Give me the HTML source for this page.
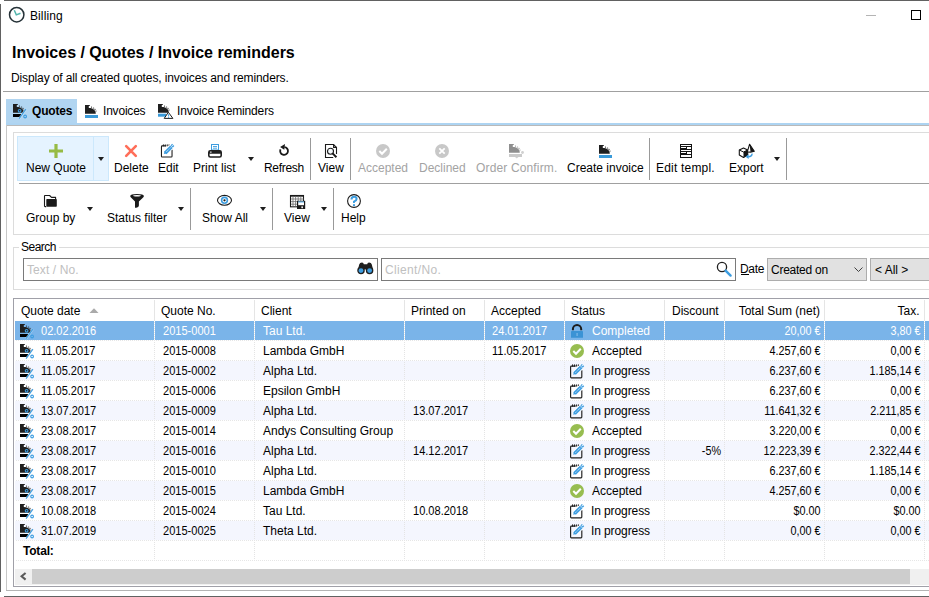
<!DOCTYPE html>
<html><head><meta charset="utf-8"><style>
*{box-sizing:border-box}
html,body{margin:0;padding:0}
body{width:929px;height:597px;overflow:hidden;position:relative;background:#fff;font-family:"Liberation Sans",sans-serif;font-size:12px;color:#000}
.a{position:absolute}
.t{position:absolute;line-height:14px;white-space:pre}
.hl{position:absolute;height:1px}
.vl{position:absolute;width:1px}
.dis{color:#a3a3a3}
.dd{position:absolute;width:0;height:0;border-left:3.5px solid transparent;border-right:3.5px solid transparent;border-top:4px solid #1e1e1e}
svg{position:absolute;overflow:visible}
.n{transform:scaleX(0.92);transform-origin:0 0}
.nr{transform:scaleX(0.9);transform-origin:100% 0}
.row{position:absolute;left:14px;width:915px;height:20px}
.row .c{position:absolute;top:0;height:19px;line-height:19px;white-space:pre}
.row .r{text-align:right}
.dot{position:absolute;height:1px;background-image:linear-gradient(to right,#e6e6e6 50%,transparent 50%);background-size:2px 1px}
.vdot{position:absolute;width:1px;background-image:linear-gradient(to bottom,transparent 50%,#e4e4e4 50%);background-size:1px 2px}
</style></head><body>
<div class="hl" style="left:4px;top:0px;width:925px;background:#616161"></div>
<div class="vl" style="left:0px;top:4px;height:588px;background:#616161"></div>
<div class="hl" style="left:4px;top:596px;width:925px;background:#616161"></div>
<svg style="left:8px;top:6px" width="17" height="17" viewBox="0 0 17 17"><circle cx="8.7" cy="8.7" r="7.2" fill="none" stroke="#263238" stroke-width="1.5"/><path d="M6.3 4.3L8.3 8.9L12.5 7.2" fill="none" stroke="#52b5ad" stroke-width="1.5"/></svg>
<div class="t" style="left:30px;top:9px;letter-spacing:0.1px">Billing</div>
<div class="hl" style="left:866px;top:15px;width:10px;background:#b4b4b4"></div>
<div class="a" style="left:911px;top:10px;width:10px;height:10px;border:1px solid #000"></div>
<div class="t" style="left:12px;top:44px;font-size:16px;font-weight:bold;line-height:18px">Invoices / Quotes / Invoice reminders</div>
<div class="t" style="left:11px;top:71px;letter-spacing:-0.12px">Display of all created quotes, invoices and reminders.</div>
<div class="hl" style="left:3px;top:91px;width:926px;background:#a0a0a0"></div>
<div class="a" style="left:6px;top:99px;width:71px;height:24px;background:#b1d5f1"></div>
<div class="a" style="left:6px;top:123px;width:923px;height:2px;background:#add4f2"></div>
<div class="hl" style="left:6px;top:125px;width:923px;background:#b9b9b9"></div>
<svg style="left:13px;top:104px" width="15" height="16" viewBox="0 0 15 16"><path d="M0 0H4.8V1H3.8V3.1C7.6 3.1 10.8 5 10.8 8.7H0Z" fill="#1f1f1f"/><circle cx="6.5" cy="2.1" r="0.6" fill="#1f1f1f"/><circle cx="8.6" cy="3" r="0.6" fill="#1f1f1f"/><circle cx="10" cy="4.3" r="0.6" fill="#1f1f1f"/><circle cx="11" cy="6" r="0.55" fill="#1f1f1f"/><rect x="0" y="10" width="8" height="3" fill="#000"/><path d="M6.1 14.7L12.9 5.1" stroke="#fff" stroke-width="2" opacity="0.5"/><path d="M6.1 14.7L12.9 5.1" stroke="#3d9de0" stroke-width="1.15"/><circle cx="6.6" cy="6.8" r="1.35" fill="#1f1f1f" stroke="#3d9de0" stroke-width="1.1"/><circle cx="12.1" cy="12.5" r="1.35" fill="none" stroke="#3d9de0" stroke-width="1.1"/></svg>
<div class="t" style="left:32px;top:104px;font-weight:bold;letter-spacing:-0.2px">Quotes</div>
<svg style="left:85px;top:105px" width="14" height="14" viewBox="0 0 14 14"><path d="M0 0H4.8V1H3.8V3.1C7.6 3.1 10.8 5 10.8 8.7H0Z" fill="#1f1f1f"/><circle cx="6.5" cy="2.1" r="0.6" fill="#1f1f1f"/><circle cx="8.6" cy="3" r="0.6" fill="#1f1f1f"/><circle cx="10" cy="4.3" r="0.6" fill="#1f1f1f"/><circle cx="11" cy="6" r="0.55" fill="#1f1f1f"/><rect x="0" y="10" width="13" height="3" fill="#3a9ad9"/></svg>
<div class="t" style="left:103px;top:104px;letter-spacing:-0.2px">Invoices</div>
<svg style="left:158px;top:104px" width="16" height="16" viewBox="0 0 16 16"><path d="M0 0H4.8V1H3.8V3.1C7.6 3.1 10.8 5 10.8 8.7H0Z" fill="#1f1f1f"/><circle cx="6.5" cy="2.1" r="0.6" fill="#1f1f1f"/><circle cx="8.6" cy="3" r="0.6" fill="#1f1f1f"/><circle cx="10" cy="4.3" r="0.6" fill="#1f1f1f"/><circle cx="11" cy="6" r="0.55" fill="#1f1f1f"/><rect x="0" y="9.7" width="8.5" height="3" fill="#3a9ad9"/><path d="M10.4 8.3L14.9 14.4H6.2Z" fill="#fff" stroke="#1f1f1f" stroke-width="1"/><rect x="10.1" y="10.2" width="1" height="2.3" fill="#3d9de0"/><rect x="10.1" y="13" width="1" height="0.9" fill="#3d9de0"/></svg>
<div class="t" style="left:177px;top:104px;letter-spacing:-0.15px">Invoice Reminders</div>
<div class="vl" style="left:6px;top:125px;height:466px;background:#c8c8c8"></div>
<div class="hl" style="left:6px;top:590px;width:923px;background:#b4b4b4"></div>
<div class="a" style="left:13px;top:132px;width:930px;height:103px;border:1px solid #dcdcdc"></div>
<div class="a" style="left:17px;top:136px;width:92px;height:45px;background:#e5f3ff;border:1px solid #cce8fc"></div>
<div class="vl" style="left:93px;top:137px;height:43px;background:#cce8fc"></div>
<div class="hl" style="left:19px;top:183px;width:910px;background:#a0a0a0"></div>
<div class="t" style="left:26px;top:161px;">New Quote</div>
<div class="t" style="left:114px;top:161px;">Delete</div>
<div class="t" style="left:158px;top:161px;">Edit</div>
<div class="t" style="left:193px;top:161px;">Print list</div>
<div class="t" style="left:264px;top:161px;letter-spacing:-0.3px">Refresh</div>
<div class="t" style="left:318px;top:161px;">View</div>
<div class="t dis" style="left:358px;top:161px;">Accepted</div>
<div class="t dis" style="left:419px;top:161px;">Declined</div>
<div class="t dis" style="left:476px;top:161px;letter-spacing:0.15px">Order Confirm.</div>
<div class="t" style="left:567px;top:161px;">Create invoice</div>
<div class="t" style="left:656px;top:161px;letter-spacing:0.2px">Edit templ.</div>
<div class="t" style="left:729px;top:161px;">Export</div>
<div class="dd" style="left:98px;top:157px"></div>
<div class="dd" style="left:248px;top:157px"></div>
<div class="dd" style="left:774px;top:157px"></div>
<div class="vl" style="left:310px;top:138px;height:42px;background:#999"></div>
<div class="vl" style="left:350px;top:138px;height:42px;background:#999"></div>
<div class="vl" style="left:649px;top:138px;height:42px;background:#999"></div>
<div class="vl" style="left:786px;top:138px;height:42px;background:#999"></div>
<svg style="left:125px;top:145px" width="12" height="12" viewBox="0 0 12 12"><path d="M1.2 1.2L10.8 10.8M10.8 1.2L1.2 10.8" stroke="#ff6e59" stroke-width="2.6" stroke-linecap="round"/></svg>
<svg style="left:49px;top:144px" width="14" height="14" viewBox="0 0 14 14"><path d="M7 0V14M0 7H14" stroke="#96bb45" stroke-width="3.2"/></svg>
<svg style="left:159px;top:142px" width="17" height="17" viewBox="0 0 18 18"><path d="M7.6 4.1H3.4Q2.6 4.1 2.6 4.9V15Q2.6 15.8 3.4 15.8H13Q13.8 15.8 13.8 15V8.2" fill="none" stroke="#1f1f1f" stroke-width="1.15"/><ellipse cx="4.6" cy="3.5" rx="0.6" ry="1.2" fill="#1f1f1f"/><ellipse cx="6.6" cy="3.5" rx="0.6" ry="1.2" fill="#1f1f1f"/><ellipse cx="8.7" cy="3.5" rx="0.6" ry="1.2" fill="#1f1f1f"/><ellipse cx="10.6" cy="3.3" rx="0.5" ry="1" fill="#1f1f1f"/><path d="M6.9 11.3L13.3 4.9" stroke="#fff" stroke-width="5.2"/><path d="M6.6 11.6L13.2 5" stroke="#3d9de0" stroke-width="3.6"/><path d="M7.6 10.6L12.4 5.8" stroke="#fff" stroke-width="0.9" stroke-dasharray="1 0.9"/><path d="M5.2 12.8L5.9 9.9L8.2 12.1Z" fill="#3d9de0"/><path d="M12.4 3.4L13.9 1.9L16.2 4.2L14.7 5.7Z" fill="#3d9de0"/><path d="M13.6 3.4L14.2 2.8L15.1 3.7L14.5 4.3Z" fill="#fff"/></svg>
<svg style="left:208px;top:143px" width="15" height="15" viewBox="0 0 15 15"><rect x="3.5" y="1.5" width="7" height="5.5" fill="#fff" stroke="#3d9de0" stroke-width="1"/><path d="M5 3.5H9M5 5.2H9" stroke="#3d9de0" stroke-width="0.9"/><rect x="0.8" y="7.8" width="12.4" height="6.2" rx="1.6" fill="none" stroke="#1f1f1f" stroke-width="1.6"/><rect x="0.8" y="7.8" width="12.4" height="3" rx="1" fill="#1f1f1f"/><rect x="2" y="8.6" width="1.6" height="1" fill="#fff"/></svg>
<svg style="left:274px;top:140px" width="20" height="20" viewBox="0 0 20 20"><path d="M10.4 7.1A3.9 3.9 0 1 1 6.5 9.4" fill="none" stroke="#1a1a1a" stroke-width="1.8"/><path d="M11 3.9L6.1 6.9L10.3 9.8Z" fill="#1a1a1a"/></svg>
<svg style="left:324px;top:143px" width="14" height="16" viewBox="0 0 14 16"><path d="M9.2 14.5H1.5V1.5H9.6L12.5 4.4V11" fill="none" stroke="#1a1a1a" stroke-width="1.1"/><path d="M9.6 1.5V4.4H12.5" fill="none" stroke="#1a1a1a" stroke-width="1.1"/><circle cx="6.5" cy="8.2" r="3" fill="#f4f9fd" stroke="#1a1a1a" stroke-width="1.1"/><path d="M8.6 10.4L12.4 14.2" stroke="#1a1a1a" stroke-width="2"/></svg>
<svg style="left:376px;top:144px" width="14" height="14" viewBox="0 0 14 14"><circle cx="7" cy="7" r="7" fill="#c8c8c8"/><path d="M3.3 7L6 9.8L10.8 4.8" fill="none" stroke="#fff" stroke-width="2"/></svg>
<svg style="left:435px;top:144px" width="14" height="14" viewBox="0 0 14 14"><circle cx="7" cy="7" r="7" fill="#c8c8c8"/><path d="M4.3 4.3L9.7 9.7M9.7 4.3L4.3 9.7" fill="none" stroke="#fff" stroke-width="1.8"/></svg>
<svg style="left:509px;top:144px" width="14" height="14" viewBox="0 0 14 14"><path d="M0 0H4.8V1H3.8V3.1C7.6 3.1 10.8 5 10.8 8.7H0Z" fill="#8f8f8f"/><circle cx="6.5" cy="2.1" r="0.6" fill="#8f8f8f"/><circle cx="8.6" cy="3" r="0.6" fill="#8f8f8f"/><circle cx="10" cy="4.3" r="0.6" fill="#8f8f8f"/><circle cx="11" cy="6" r="0.55" fill="#8f8f8f"/><rect x="0" y="10" width="13" height="3" fill="#cacaca"/><circle cx="13.5" cy="8.5" r="1.4" fill="#d0d0d0"/><path d="M6 13H9.5L7.75 14.6Z" fill="#d0d0d0"/></svg>
<svg style="left:599px;top:145px" width="14" height="14" viewBox="0 0 14 14"><path d="M0 0H4.8V1H3.8V3.1C7.6 3.1 10.8 5 10.8 8.7H0Z" fill="#1f1f1f"/><circle cx="6.5" cy="2.1" r="0.6" fill="#1f1f1f"/><circle cx="8.6" cy="3" r="0.6" fill="#1f1f1f"/><circle cx="10" cy="4.3" r="0.6" fill="#1f1f1f"/><circle cx="11" cy="6" r="0.55" fill="#1f1f1f"/><rect x="0" y="10" width="13" height="3" fill="#3a9ad9"/></svg>
<svg style="left:680px;top:144px" width="12" height="14" viewBox="0 0 12 14"><g shape-rendering="crispEdges"><rect x="0" y="0" width="12" height="14" fill="#141414"/><rect x="1" y="1" width="10" height="1" fill="#fff"/><rect x="1" y="3" width="5" height="1" fill="#fff"/><rect x="7" y="3" width="4" height="2" fill="#fff"/><rect x="1" y="6" width="10" height="1" fill="#fff"/><rect x="1" y="8" width="5" height="1" fill="#fff"/><rect x="7" y="8" width="4" height="2" fill="#fff"/><rect x="1" y="11" width="10" height="2" fill="#fff"/></g></svg>
<svg style="left:738px;top:143px" width="18" height="17" viewBox="0 0 18 17"><path d="M1.3 7L5.5 5L9.7 7V12L5.5 14.4L1.3 12Z" fill="#fff" stroke="#141414" stroke-width="1.1" stroke-linejoin="round"/><path d="M1.3 7L5.5 9L9.7 7" fill="none" stroke="#141414" stroke-width="1"/><path d="M5.5 9L9.7 7V12L5.5 14.4Z" fill="#141414"/><path d="M11.6 1.2L16.3 8.2L12.6 9.1L9.3 8.9Z" fill="#fff" stroke="#141414" stroke-width="1.1" stroke-linejoin="round"/><path d="M11.6 1.2L16.3 8.2L12.6 9.1Z" fill="#141414"/><path d="M14 10.6Q14.2 13.6 10.2 13.7" fill="none" stroke="#3d9de0" stroke-width="1.5"/><path d="M7.6 13.7L10.6 11.3V16.1Z" fill="#3d9de0"/></svg>
<div class="t" style="left:26px;top:211px;">Group by</div>
<div class="t" style="left:107px;top:211px;">Status filter</div>
<div class="t" style="left:202px;top:211px;">Show All</div>
<div class="t" style="left:284px;top:211px;">View</div>
<div class="t" style="left:341px;top:211px;">Help</div>
<div class="dd" style="left:87px;top:207px"></div>
<div class="dd" style="left:178px;top:207px"></div>
<div class="dd" style="left:260px;top:207px"></div>
<div class="dd" style="left:321px;top:207px"></div>
<div class="vl" style="left:190px;top:188px;height:42px;background:#999"></div>
<div class="vl" style="left:272px;top:188px;height:42px;background:#999"></div>
<div class="vl" style="left:333px;top:188px;height:42px;background:#999"></div>
<svg style="left:43px;top:194px" width="15" height="14" viewBox="0 0 15 14"><path d="M3.2 12.6H2.1Q1.5 12.6 1.5 12V2Q1.5 1.5 2 1.5H6.6L8.5 3.4H12.6V5.2" fill="none" stroke="#1a1a1a" stroke-width="1.1" stroke-linejoin="round"/><rect x="3.3" y="5" width="10.5" height="7.7" rx="0.7" fill="#1a1a1a"/></svg>
<svg style="left:130px;top:193px" width="15" height="16" viewBox="0 0 15 16"><path d="M0.2 3Q0.2 1 6.9 1Q13.9 1 13.9 3Q13.9 4 12.6 5.1L8.9 8.4V12.6Q8.9 14.4 6.3 14.8H5V8.4L1.5 5.1Q0.2 4 0.2 3Z" fill="#1a1a1a"/><ellipse cx="7" cy="2.7" rx="3.9" ry="0.75" fill="#fff"/></svg>
<svg style="left:216px;top:194px" width="17" height="13" viewBox="0 0 17 13"><ellipse cx="8.5" cy="6.3" rx="7" ry="4.9" fill="#fff" stroke="#1a1a1a" stroke-width="1.1"/><circle cx="8.5" cy="6.3" r="2.9" fill="#fff" stroke="#3d9de0" stroke-width="1.6"/><circle cx="8.5" cy="6.3" r="1.15" fill="#1a1a1a"/></svg>
<svg style="left:289px;top:194px" width="17" height="16" viewBox="0 0 17 16"><rect x="1.5" y="1.5" width="13" height="11.3" fill="#fff" stroke="#1a1a1a" stroke-width="1.1"/><rect x="1" y="1" width="14" height="1.7" fill="#1a1a1a"/><path d="M4 2V12.5M6.6 2V12.5M9.2 2V12.5M11.8 2V12.5M2 5H14.5M2 7.6H14.5M2 10.2H14.5" stroke="#6a6a6a" stroke-width="0.8"/><rect x="8" y="6.8" width="8.2" height="8.2" fill="#1a1a1a"/><rect x="9.2" y="7.6" width="5.8" height="3.6" fill="#fff"/><rect x="9.2" y="7.5" width="5.8" height="0.9" fill="#3d9de0"/><rect x="12.4" y="12.4" width="1.5" height="1.8" fill="#fff"/></svg>
<svg style="left:347px;top:194px" width="15" height="15" viewBox="0 0 15 15"><circle cx="7" cy="7" r="6.4" fill="#fff" stroke="#1a1a1a" stroke-width="1.1"/><path d="M4.5 5.4Q4.5 2.8 7 2.8Q9.6 2.8 9.6 5.1Q9.6 6.5 7 7.6V9" fill="none" stroke="#3d9de0" stroke-width="2"/><rect x="6" y="10.2" width="2" height="1.8" fill="#3d9de0"/></svg>
<div class="a" style="left:13px;top:247px;width:930px;height:43px;border:1px solid #dcdcdc"></div>
<div class="a" style="left:19px;top:240px;width:40px;height:12px;background:#fff"></div>
<div class="t" style="left:21px;top:240px;letter-spacing:-0.5px">Search</div>
<div class="a" style="left:23px;top:258px;width:355px;height:23px;border:1px solid #7a7a7a;background:#fff"></div>
<div class="t" style="left:27px;top:263px;color:#c0c0c0;letter-spacing:0.1px">Text / No.</div>
<svg style="left:357px;top:262px" width="17" height="13" viewBox="0 0 17 13"><path d="M2.2 2.5Q2.7 0.6 5 0.6Q6.6 0.6 6.8 2.3H10.2Q10.4 0.6 12 0.6Q14.3 0.6 14.8 2.5L16 7.5H1Z" fill="#1f1f1f"/><circle cx="4" cy="8.6" r="3.1" fill="#3d9de0" stroke="#1f1f1f" stroke-width="1.3"/><circle cx="12.6" cy="8.6" r="3.1" fill="#3d9de0" stroke="#1f1f1f" stroke-width="1.3"/></svg>
<div class="a" style="left:381px;top:258px;width:355px;height:23px;border:1px solid #7a7a7a;background:#fff"></div>
<div class="t" style="left:385px;top:263px;color:#c0c0c0;letter-spacing:0.35px">Client/No.</div>
<svg style="left:716px;top:261px" width="17" height="17" viewBox="0 0 17 17"><circle cx="6" cy="6" r="4.6" fill="#fff" stroke="#1f1f1f" stroke-width="1.3"/><path d="M9.6 9.6L14.6 14.6" stroke="#3d9de0" stroke-width="2.4" stroke-linecap="round"/></svg>
<div class="t" style="left:740px;top:262px;letter-spacing:-0.3px">Date</div>
<div class="hl" style="left:741px;top:274px;width:8px;background:#000"></div>
<div class="a" style="left:767px;top:258px;width:100px;height:23px;border:1px solid #adadad;background:#e1e1e1"></div>
<div class="t" style="left:771px;top:263px;letter-spacing:-0.25px">Created on</div>
<svg style="left:854px;top:267px" width="9" height="6" viewBox="0 0 9 6"><path d="M0.5 0.5L4.5 4.5L8.5 0.5" fill="none" stroke="#404040" stroke-width="1"/></svg>
<div class="a" style="left:870px;top:258px;width:80px;height:23px;border:1px solid #adadad;background:#e1e1e1"></div>
<div class="t" style="left:875px;top:263px;">&lt; All &gt;</div>
<div class="a" style="left:13px;top:298px;width:930px;height:289px;border:1px solid #a0a0a8"></div>
<div class="t" style="left:21px;top:304px;">Quote date</div>
<div class="t" style="left:161px;top:304px;">Quote No.</div>
<div class="t" style="left:261px;top:304px;">Client</div>
<div class="t" style="left:411px;top:304px;">Printed on</div>
<div class="t" style="left:491px;top:304px;">Accepted</div>
<div class="t" style="left:571px;top:304px;">Status</div>
<div class="t" style="left:672px;top:304px;">Discount</div>
<div class="t" style="left:724px;top:304px;width:96px;text-align:right">Total Sum (net)</div>
<div class="t" style="left:824px;top:304px;width:95.5px;text-align:right">Tax.</div>
<svg style="left:89px;top:308px" width="10" height="5" viewBox="0 0 10 5"><path d="M0.5 5L5 0.3L9.5 5Z" fill="#aaa"/></svg>
<div class="vl" style="left:154px;top:300px;height:21px;background:#e5e5e5"></div>
<div class="vl" style="left:254px;top:300px;height:21px;background:#e5e5e5"></div>
<div class="vl" style="left:404px;top:300px;height:21px;background:#e5e5e5"></div>
<div class="vl" style="left:484px;top:300px;height:21px;background:#e5e5e5"></div>
<div class="vl" style="left:564px;top:300px;height:21px;background:#e5e5e5"></div>
<div class="vl" style="left:664px;top:300px;height:21px;background:#e5e5e5"></div>
<div class="vl" style="left:724px;top:300px;height:21px;background:#e5e5e5"></div>
<div class="vl" style="left:824px;top:300px;height:21px;background:#e5e5e5"></div>
<div class="vl" style="left:924px;top:300px;height:21px;background:#e5e5e5"></div>
<div class="a" style="left:15px;top:321px;width:914px;height:19px;background:#7ab4e9"></div>
<svg style="left:20px;top:324px" width="15" height="16" viewBox="0 0 15 16"><path d="M0 0H4.8V1H3.8V3.1C7.6 3.1 10.8 5 10.8 8.7H0Z" fill="#1f1f1f"/><circle cx="6.5" cy="2.1" r="0.6" fill="#1f1f1f"/><circle cx="8.6" cy="3" r="0.6" fill="#1f1f1f"/><circle cx="10" cy="4.3" r="0.6" fill="#1f1f1f"/><circle cx="11" cy="6" r="0.55" fill="#1f1f1f"/><rect x="0" y="10" width="8" height="3" fill="#000"/><path d="M6.1 14.7L12.9 5.1" stroke="#fff" stroke-width="2" opacity="0.5"/><path d="M6.1 14.7L12.9 5.1" stroke="#3d9de0" stroke-width="1.15"/><circle cx="6.6" cy="6.8" r="1.35" fill="#1f1f1f" stroke="#3d9de0" stroke-width="1.1"/><circle cx="12.1" cy="12.5" r="1.35" fill="none" stroke="#3d9de0" stroke-width="1.1"/></svg>
<div class="t n" style="left:41px;top:324px;color:#fff">02.02.2016</div>
<div class="t n" style="left:163px;top:324px;color:#fff">2015-0001</div>
<div class="t " style="left:263px;top:324px;color:#fff">Tau Ltd.</div>
<div class="t n" style="left:492px;top:324px;color:#fff">24.01.2017</div>
<svg style="left:568px;top:321px" width="18" height="18" viewBox="0 0 18 18"><path d="M4.9 9.3V8.1A4.15 4.15 0 0 1 13.2 8.1V9.3" fill="none" stroke="#1c1c1c" stroke-width="2"/><rect x="3" y="10.1" width="12" height="6.7" rx="0.4" fill="#3b93d5"/><rect x="8.4" y="12" width="1.4" height="3" fill="#74b3e6"/></svg>
<div class="t " style="left:592px;top:324px;color:#fff">Completed</div>
<div class="t nr" style="left:724px;top:324px;width:96.6px;text-align:right;color:#fff">20,00 €</div>
<div class="t nr" style="left:824px;top:324px;width:96.6px;text-align:right;color:#fff">3,80 €</div>
<div class="dot" style="left:16px;top:340px;width:913px"></div>
<div class="vdot" style="left:154px;top:321px;height:19px;background-image:linear-gradient(to bottom,#fff 50%,#e4e4e4 50%)"></div>
<div class="vdot" style="left:254px;top:321px;height:19px;background-image:linear-gradient(to bottom,#fff 50%,#e4e4e4 50%)"></div>
<div class="vdot" style="left:404px;top:321px;height:19px;background-image:linear-gradient(to bottom,#fff 50%,#e4e4e4 50%)"></div>
<div class="vdot" style="left:484px;top:321px;height:19px;background-image:linear-gradient(to bottom,#fff 50%,#e4e4e4 50%)"></div>
<div class="vdot" style="left:564px;top:321px;height:19px;background-image:linear-gradient(to bottom,#fff 50%,#e4e4e4 50%)"></div>
<div class="vdot" style="left:664px;top:321px;height:19px;background-image:linear-gradient(to bottom,#fff 50%,#e4e4e4 50%)"></div>
<div class="vdot" style="left:724px;top:321px;height:19px;background-image:linear-gradient(to bottom,#fff 50%,#e4e4e4 50%)"></div>
<div class="vdot" style="left:824px;top:321px;height:19px;background-image:linear-gradient(to bottom,#fff 50%,#e4e4e4 50%)"></div>
<div class="vdot" style="left:924px;top:321px;height:19px;background-image:linear-gradient(to bottom,#fff 50%,#e4e4e4 50%)"></div>
<div class="a" style="left:15px;top:341px;width:914px;height:19px;background:#fff"></div>
<svg style="left:20px;top:344px" width="15" height="16" viewBox="0 0 15 16"><path d="M0 0H4.8V1H3.8V3.1C7.6 3.1 10.8 5 10.8 8.7H0Z" fill="#1f1f1f"/><circle cx="6.5" cy="2.1" r="0.6" fill="#1f1f1f"/><circle cx="8.6" cy="3" r="0.6" fill="#1f1f1f"/><circle cx="10" cy="4.3" r="0.6" fill="#1f1f1f"/><circle cx="11" cy="6" r="0.55" fill="#1f1f1f"/><rect x="0" y="10" width="8" height="3" fill="#000"/><path d="M6.1 14.7L12.9 5.1" stroke="#fff" stroke-width="2" opacity="0.5"/><path d="M6.1 14.7L12.9 5.1" stroke="#3d9de0" stroke-width="1.15"/><circle cx="6.6" cy="6.8" r="1.35" fill="#1f1f1f" stroke="#3d9de0" stroke-width="1.1"/><circle cx="12.1" cy="12.5" r="1.35" fill="none" stroke="#3d9de0" stroke-width="1.1"/></svg>
<div class="t n" style="left:41px;top:344px;color:#000">11.05.2017</div>
<div class="t n" style="left:163px;top:344px;color:#000">2015-0008</div>
<div class="t " style="left:263px;top:344px;color:#000">Lambda GmbH</div>
<div class="t n" style="left:492px;top:344px;color:#000">11.05.2017</div>
<svg style="left:570px;top:344px" width="14" height="14" viewBox="0 0 14 14"><circle cx="7" cy="7" r="7" fill="#97bd50"/><path d="M3.3 7L6 9.8L10.8 4.8" fill="none" stroke="#fff" stroke-width="2"/></svg>
<div class="t " style="left:592px;top:344px;color:#000">Accepted</div>
<div class="t nr" style="left:724px;top:344px;width:96.6px;text-align:right;color:#000">4.257,60 €</div>
<div class="t nr" style="left:824px;top:344px;width:96.6px;text-align:right;color:#000">0,00 €</div>
<div class="dot" style="left:16px;top:360px;width:913px"></div>
<div class="vdot" style="left:154px;top:341px;height:19px"></div>
<div class="vdot" style="left:254px;top:341px;height:19px"></div>
<div class="vdot" style="left:404px;top:341px;height:19px"></div>
<div class="vdot" style="left:484px;top:341px;height:19px"></div>
<div class="vdot" style="left:564px;top:341px;height:19px"></div>
<div class="vdot" style="left:664px;top:341px;height:19px"></div>
<div class="vdot" style="left:724px;top:341px;height:19px"></div>
<div class="vdot" style="left:824px;top:341px;height:19px"></div>
<div class="vdot" style="left:924px;top:341px;height:19px"></div>
<div class="a" style="left:15px;top:361px;width:914px;height:19px;background:#f4f6fe"></div>
<svg style="left:20px;top:364px" width="15" height="16" viewBox="0 0 15 16"><path d="M0 0H4.8V1H3.8V3.1C7.6 3.1 10.8 5 10.8 8.7H0Z" fill="#1f1f1f"/><circle cx="6.5" cy="2.1" r="0.6" fill="#1f1f1f"/><circle cx="8.6" cy="3" r="0.6" fill="#1f1f1f"/><circle cx="10" cy="4.3" r="0.6" fill="#1f1f1f"/><circle cx="11" cy="6" r="0.55" fill="#1f1f1f"/><rect x="0" y="10" width="8" height="3" fill="#000"/><path d="M6.1 14.7L12.9 5.1" stroke="#fff" stroke-width="2" opacity="0.5"/><path d="M6.1 14.7L12.9 5.1" stroke="#3d9de0" stroke-width="1.15"/><circle cx="6.6" cy="6.8" r="1.35" fill="#1f1f1f" stroke="#3d9de0" stroke-width="1.1"/><circle cx="12.1" cy="12.5" r="1.35" fill="none" stroke="#3d9de0" stroke-width="1.1"/></svg>
<div class="t n" style="left:41px;top:364px;color:#000">11.05.2017</div>
<div class="t n" style="left:163px;top:364px;color:#000">2015-0002</div>
<div class="t " style="left:263px;top:364px;color:#000">Alpha Ltd.</div>
<svg style="left:568px;top:362px" width="18" height="18" viewBox="0 0 18 18"><path d="M7.6 4.1H3.4Q2.6 4.1 2.6 4.9V15Q2.6 15.8 3.4 15.8H13Q13.8 15.8 13.8 15V8.2" fill="none" stroke="#1f1f1f" stroke-width="1.15"/><ellipse cx="4.6" cy="3.5" rx="0.6" ry="1.2" fill="#1f1f1f"/><ellipse cx="6.6" cy="3.5" rx="0.6" ry="1.2" fill="#1f1f1f"/><ellipse cx="8.7" cy="3.5" rx="0.6" ry="1.2" fill="#1f1f1f"/><ellipse cx="10.6" cy="3.3" rx="0.5" ry="1" fill="#1f1f1f"/><path d="M6.9 11.3L13.3 4.9" stroke="#fff" stroke-width="5.2"/><path d="M6.6 11.6L13.2 5" stroke="#3d9de0" stroke-width="3.6"/><path d="M7.6 10.6L12.4 5.8" stroke="#fff" stroke-width="0.9" stroke-dasharray="1 0.9"/><path d="M5.2 12.8L5.9 9.9L8.2 12.1Z" fill="#3d9de0"/><path d="M12.4 3.4L13.9 1.9L16.2 4.2L14.7 5.7Z" fill="#3d9de0"/><path d="M13.6 3.4L14.2 2.8L15.1 3.7L14.5 4.3Z" fill="#fff"/></svg>
<div class="t" style="left:591px;top:364px;color:#000;letter-spacing:-0.1px">In progress</div>
<div class="t nr" style="left:724px;top:364px;width:96.6px;text-align:right;color:#000">6.237,60 €</div>
<div class="t nr" style="left:824px;top:364px;width:96.6px;text-align:right;color:#000">1.185,14 €</div>
<div class="dot" style="left:16px;top:380px;width:913px"></div>
<div class="vdot" style="left:154px;top:361px;height:19px"></div>
<div class="vdot" style="left:254px;top:361px;height:19px"></div>
<div class="vdot" style="left:404px;top:361px;height:19px"></div>
<div class="vdot" style="left:484px;top:361px;height:19px"></div>
<div class="vdot" style="left:564px;top:361px;height:19px"></div>
<div class="vdot" style="left:664px;top:361px;height:19px"></div>
<div class="vdot" style="left:724px;top:361px;height:19px"></div>
<div class="vdot" style="left:824px;top:361px;height:19px"></div>
<div class="vdot" style="left:924px;top:361px;height:19px"></div>
<div class="a" style="left:15px;top:381px;width:914px;height:19px;background:#fff"></div>
<svg style="left:20px;top:384px" width="15" height="16" viewBox="0 0 15 16"><path d="M0 0H4.8V1H3.8V3.1C7.6 3.1 10.8 5 10.8 8.7H0Z" fill="#1f1f1f"/><circle cx="6.5" cy="2.1" r="0.6" fill="#1f1f1f"/><circle cx="8.6" cy="3" r="0.6" fill="#1f1f1f"/><circle cx="10" cy="4.3" r="0.6" fill="#1f1f1f"/><circle cx="11" cy="6" r="0.55" fill="#1f1f1f"/><rect x="0" y="10" width="8" height="3" fill="#000"/><path d="M6.1 14.7L12.9 5.1" stroke="#fff" stroke-width="2" opacity="0.5"/><path d="M6.1 14.7L12.9 5.1" stroke="#3d9de0" stroke-width="1.15"/><circle cx="6.6" cy="6.8" r="1.35" fill="#1f1f1f" stroke="#3d9de0" stroke-width="1.1"/><circle cx="12.1" cy="12.5" r="1.35" fill="none" stroke="#3d9de0" stroke-width="1.1"/></svg>
<div class="t n" style="left:41px;top:384px;color:#000">11.05.2017</div>
<div class="t n" style="left:163px;top:384px;color:#000">2015-0006</div>
<div class="t " style="left:263px;top:384px;color:#000">Epsilon GmbH</div>
<svg style="left:568px;top:382px" width="18" height="18" viewBox="0 0 18 18"><path d="M7.6 4.1H3.4Q2.6 4.1 2.6 4.9V15Q2.6 15.8 3.4 15.8H13Q13.8 15.8 13.8 15V8.2" fill="none" stroke="#1f1f1f" stroke-width="1.15"/><ellipse cx="4.6" cy="3.5" rx="0.6" ry="1.2" fill="#1f1f1f"/><ellipse cx="6.6" cy="3.5" rx="0.6" ry="1.2" fill="#1f1f1f"/><ellipse cx="8.7" cy="3.5" rx="0.6" ry="1.2" fill="#1f1f1f"/><ellipse cx="10.6" cy="3.3" rx="0.5" ry="1" fill="#1f1f1f"/><path d="M6.9 11.3L13.3 4.9" stroke="#fff" stroke-width="5.2"/><path d="M6.6 11.6L13.2 5" stroke="#3d9de0" stroke-width="3.6"/><path d="M7.6 10.6L12.4 5.8" stroke="#fff" stroke-width="0.9" stroke-dasharray="1 0.9"/><path d="M5.2 12.8L5.9 9.9L8.2 12.1Z" fill="#3d9de0"/><path d="M12.4 3.4L13.9 1.9L16.2 4.2L14.7 5.7Z" fill="#3d9de0"/><path d="M13.6 3.4L14.2 2.8L15.1 3.7L14.5 4.3Z" fill="#fff"/></svg>
<div class="t" style="left:591px;top:384px;color:#000;letter-spacing:-0.1px">In progress</div>
<div class="t nr" style="left:724px;top:384px;width:96.6px;text-align:right;color:#000">6.237,60 €</div>
<div class="t nr" style="left:824px;top:384px;width:96.6px;text-align:right;color:#000">0,00 €</div>
<div class="dot" style="left:16px;top:400px;width:913px"></div>
<div class="vdot" style="left:154px;top:381px;height:19px"></div>
<div class="vdot" style="left:254px;top:381px;height:19px"></div>
<div class="vdot" style="left:404px;top:381px;height:19px"></div>
<div class="vdot" style="left:484px;top:381px;height:19px"></div>
<div class="vdot" style="left:564px;top:381px;height:19px"></div>
<div class="vdot" style="left:664px;top:381px;height:19px"></div>
<div class="vdot" style="left:724px;top:381px;height:19px"></div>
<div class="vdot" style="left:824px;top:381px;height:19px"></div>
<div class="vdot" style="left:924px;top:381px;height:19px"></div>
<div class="a" style="left:15px;top:401px;width:914px;height:19px;background:#f4f6fe"></div>
<svg style="left:20px;top:404px" width="15" height="16" viewBox="0 0 15 16"><path d="M0 0H4.8V1H3.8V3.1C7.6 3.1 10.8 5 10.8 8.7H0Z" fill="#1f1f1f"/><circle cx="6.5" cy="2.1" r="0.6" fill="#1f1f1f"/><circle cx="8.6" cy="3" r="0.6" fill="#1f1f1f"/><circle cx="10" cy="4.3" r="0.6" fill="#1f1f1f"/><circle cx="11" cy="6" r="0.55" fill="#1f1f1f"/><rect x="0" y="10" width="8" height="3" fill="#000"/><path d="M6.1 14.7L12.9 5.1" stroke="#fff" stroke-width="2" opacity="0.5"/><path d="M6.1 14.7L12.9 5.1" stroke="#3d9de0" stroke-width="1.15"/><circle cx="6.6" cy="6.8" r="1.35" fill="#1f1f1f" stroke="#3d9de0" stroke-width="1.1"/><circle cx="12.1" cy="12.5" r="1.35" fill="none" stroke="#3d9de0" stroke-width="1.1"/></svg>
<div class="t n" style="left:41px;top:404px;color:#000">13.07.2017</div>
<div class="t n" style="left:163px;top:404px;color:#000">2015-0009</div>
<div class="t " style="left:263px;top:404px;color:#000">Alpha Ltd.</div>
<div class="t n" style="left:413px;top:404px;color:#000">13.07.2017</div>
<svg style="left:568px;top:402px" width="18" height="18" viewBox="0 0 18 18"><path d="M7.6 4.1H3.4Q2.6 4.1 2.6 4.9V15Q2.6 15.8 3.4 15.8H13Q13.8 15.8 13.8 15V8.2" fill="none" stroke="#1f1f1f" stroke-width="1.15"/><ellipse cx="4.6" cy="3.5" rx="0.6" ry="1.2" fill="#1f1f1f"/><ellipse cx="6.6" cy="3.5" rx="0.6" ry="1.2" fill="#1f1f1f"/><ellipse cx="8.7" cy="3.5" rx="0.6" ry="1.2" fill="#1f1f1f"/><ellipse cx="10.6" cy="3.3" rx="0.5" ry="1" fill="#1f1f1f"/><path d="M6.9 11.3L13.3 4.9" stroke="#fff" stroke-width="5.2"/><path d="M6.6 11.6L13.2 5" stroke="#3d9de0" stroke-width="3.6"/><path d="M7.6 10.6L12.4 5.8" stroke="#fff" stroke-width="0.9" stroke-dasharray="1 0.9"/><path d="M5.2 12.8L5.9 9.9L8.2 12.1Z" fill="#3d9de0"/><path d="M12.4 3.4L13.9 1.9L16.2 4.2L14.7 5.7Z" fill="#3d9de0"/><path d="M13.6 3.4L14.2 2.8L15.1 3.7L14.5 4.3Z" fill="#fff"/></svg>
<div class="t" style="left:591px;top:404px;color:#000;letter-spacing:-0.1px">In progress</div>
<div class="t nr" style="left:724px;top:404px;width:96.6px;text-align:right;color:#000">11.641,32 €</div>
<div class="t nr" style="left:824px;top:404px;width:96.6px;text-align:right;color:#000">2.211,85 €</div>
<div class="dot" style="left:16px;top:420px;width:913px"></div>
<div class="vdot" style="left:154px;top:401px;height:19px"></div>
<div class="vdot" style="left:254px;top:401px;height:19px"></div>
<div class="vdot" style="left:404px;top:401px;height:19px"></div>
<div class="vdot" style="left:484px;top:401px;height:19px"></div>
<div class="vdot" style="left:564px;top:401px;height:19px"></div>
<div class="vdot" style="left:664px;top:401px;height:19px"></div>
<div class="vdot" style="left:724px;top:401px;height:19px"></div>
<div class="vdot" style="left:824px;top:401px;height:19px"></div>
<div class="vdot" style="left:924px;top:401px;height:19px"></div>
<div class="a" style="left:15px;top:421px;width:914px;height:19px;background:#fff"></div>
<svg style="left:20px;top:424px" width="15" height="16" viewBox="0 0 15 16"><path d="M0 0H4.8V1H3.8V3.1C7.6 3.1 10.8 5 10.8 8.7H0Z" fill="#1f1f1f"/><circle cx="6.5" cy="2.1" r="0.6" fill="#1f1f1f"/><circle cx="8.6" cy="3" r="0.6" fill="#1f1f1f"/><circle cx="10" cy="4.3" r="0.6" fill="#1f1f1f"/><circle cx="11" cy="6" r="0.55" fill="#1f1f1f"/><rect x="0" y="10" width="8" height="3" fill="#000"/><path d="M6.1 14.7L12.9 5.1" stroke="#fff" stroke-width="2" opacity="0.5"/><path d="M6.1 14.7L12.9 5.1" stroke="#3d9de0" stroke-width="1.15"/><circle cx="6.6" cy="6.8" r="1.35" fill="#1f1f1f" stroke="#3d9de0" stroke-width="1.1"/><circle cx="12.1" cy="12.5" r="1.35" fill="none" stroke="#3d9de0" stroke-width="1.1"/></svg>
<div class="t n" style="left:41px;top:424px;color:#000">23.08.2017</div>
<div class="t n" style="left:163px;top:424px;color:#000">2015-0014</div>
<div class="t " style="left:263px;top:424px;color:#000">Andys Consulting Group</div>
<svg style="left:570px;top:424px" width="14" height="14" viewBox="0 0 14 14"><circle cx="7" cy="7" r="7" fill="#97bd50"/><path d="M3.3 7L6 9.8L10.8 4.8" fill="none" stroke="#fff" stroke-width="2"/></svg>
<div class="t " style="left:592px;top:424px;color:#000">Accepted</div>
<div class="t nr" style="left:724px;top:424px;width:96.6px;text-align:right;color:#000">3.220,00 €</div>
<div class="t nr" style="left:824px;top:424px;width:96.6px;text-align:right;color:#000">0,00 €</div>
<div class="dot" style="left:16px;top:440px;width:913px"></div>
<div class="vdot" style="left:154px;top:421px;height:19px"></div>
<div class="vdot" style="left:254px;top:421px;height:19px"></div>
<div class="vdot" style="left:404px;top:421px;height:19px"></div>
<div class="vdot" style="left:484px;top:421px;height:19px"></div>
<div class="vdot" style="left:564px;top:421px;height:19px"></div>
<div class="vdot" style="left:664px;top:421px;height:19px"></div>
<div class="vdot" style="left:724px;top:421px;height:19px"></div>
<div class="vdot" style="left:824px;top:421px;height:19px"></div>
<div class="vdot" style="left:924px;top:421px;height:19px"></div>
<div class="a" style="left:15px;top:441px;width:914px;height:19px;background:#f4f6fe"></div>
<svg style="left:20px;top:444px" width="15" height="16" viewBox="0 0 15 16"><path d="M0 0H4.8V1H3.8V3.1C7.6 3.1 10.8 5 10.8 8.7H0Z" fill="#1f1f1f"/><circle cx="6.5" cy="2.1" r="0.6" fill="#1f1f1f"/><circle cx="8.6" cy="3" r="0.6" fill="#1f1f1f"/><circle cx="10" cy="4.3" r="0.6" fill="#1f1f1f"/><circle cx="11" cy="6" r="0.55" fill="#1f1f1f"/><rect x="0" y="10" width="8" height="3" fill="#000"/><path d="M6.1 14.7L12.9 5.1" stroke="#fff" stroke-width="2" opacity="0.5"/><path d="M6.1 14.7L12.9 5.1" stroke="#3d9de0" stroke-width="1.15"/><circle cx="6.6" cy="6.8" r="1.35" fill="#1f1f1f" stroke="#3d9de0" stroke-width="1.1"/><circle cx="12.1" cy="12.5" r="1.35" fill="none" stroke="#3d9de0" stroke-width="1.1"/></svg>
<div class="t n" style="left:41px;top:444px;color:#000">23.08.2017</div>
<div class="t n" style="left:163px;top:444px;color:#000">2015-0016</div>
<div class="t " style="left:263px;top:444px;color:#000">Alpha Ltd.</div>
<div class="t n" style="left:413px;top:444px;color:#000">14.12.2017</div>
<svg style="left:568px;top:442px" width="18" height="18" viewBox="0 0 18 18"><path d="M7.6 4.1H3.4Q2.6 4.1 2.6 4.9V15Q2.6 15.8 3.4 15.8H13Q13.8 15.8 13.8 15V8.2" fill="none" stroke="#1f1f1f" stroke-width="1.15"/><ellipse cx="4.6" cy="3.5" rx="0.6" ry="1.2" fill="#1f1f1f"/><ellipse cx="6.6" cy="3.5" rx="0.6" ry="1.2" fill="#1f1f1f"/><ellipse cx="8.7" cy="3.5" rx="0.6" ry="1.2" fill="#1f1f1f"/><ellipse cx="10.6" cy="3.3" rx="0.5" ry="1" fill="#1f1f1f"/><path d="M6.9 11.3L13.3 4.9" stroke="#fff" stroke-width="5.2"/><path d="M6.6 11.6L13.2 5" stroke="#3d9de0" stroke-width="3.6"/><path d="M7.6 10.6L12.4 5.8" stroke="#fff" stroke-width="0.9" stroke-dasharray="1 0.9"/><path d="M5.2 12.8L5.9 9.9L8.2 12.1Z" fill="#3d9de0"/><path d="M12.4 3.4L13.9 1.9L16.2 4.2L14.7 5.7Z" fill="#3d9de0"/><path d="M13.6 3.4L14.2 2.8L15.1 3.7L14.5 4.3Z" fill="#fff"/></svg>
<div class="t" style="left:591px;top:444px;color:#000;letter-spacing:-0.1px">In progress</div>
<div class="t nr" style="left:664px;top:444px;width:57px;text-align:right;color:#000">-5%</div>
<div class="t nr" style="left:724px;top:444px;width:96.6px;text-align:right;color:#000">12.223,39 €</div>
<div class="t nr" style="left:824px;top:444px;width:96.6px;text-align:right;color:#000">2.322,44 €</div>
<div class="dot" style="left:16px;top:460px;width:913px"></div>
<div class="vdot" style="left:154px;top:441px;height:19px"></div>
<div class="vdot" style="left:254px;top:441px;height:19px"></div>
<div class="vdot" style="left:404px;top:441px;height:19px"></div>
<div class="vdot" style="left:484px;top:441px;height:19px"></div>
<div class="vdot" style="left:564px;top:441px;height:19px"></div>
<div class="vdot" style="left:664px;top:441px;height:19px"></div>
<div class="vdot" style="left:724px;top:441px;height:19px"></div>
<div class="vdot" style="left:824px;top:441px;height:19px"></div>
<div class="vdot" style="left:924px;top:441px;height:19px"></div>
<div class="a" style="left:15px;top:461px;width:914px;height:19px;background:#fff"></div>
<svg style="left:20px;top:464px" width="15" height="16" viewBox="0 0 15 16"><path d="M0 0H4.8V1H3.8V3.1C7.6 3.1 10.8 5 10.8 8.7H0Z" fill="#1f1f1f"/><circle cx="6.5" cy="2.1" r="0.6" fill="#1f1f1f"/><circle cx="8.6" cy="3" r="0.6" fill="#1f1f1f"/><circle cx="10" cy="4.3" r="0.6" fill="#1f1f1f"/><circle cx="11" cy="6" r="0.55" fill="#1f1f1f"/><rect x="0" y="10" width="8" height="3" fill="#000"/><path d="M6.1 14.7L12.9 5.1" stroke="#fff" stroke-width="2" opacity="0.5"/><path d="M6.1 14.7L12.9 5.1" stroke="#3d9de0" stroke-width="1.15"/><circle cx="6.6" cy="6.8" r="1.35" fill="#1f1f1f" stroke="#3d9de0" stroke-width="1.1"/><circle cx="12.1" cy="12.5" r="1.35" fill="none" stroke="#3d9de0" stroke-width="1.1"/></svg>
<div class="t n" style="left:41px;top:464px;color:#000">23.08.2017</div>
<div class="t n" style="left:163px;top:464px;color:#000">2015-0010</div>
<div class="t " style="left:263px;top:464px;color:#000">Alpha Ltd.</div>
<svg style="left:568px;top:462px" width="18" height="18" viewBox="0 0 18 18"><path d="M7.6 4.1H3.4Q2.6 4.1 2.6 4.9V15Q2.6 15.8 3.4 15.8H13Q13.8 15.8 13.8 15V8.2" fill="none" stroke="#1f1f1f" stroke-width="1.15"/><ellipse cx="4.6" cy="3.5" rx="0.6" ry="1.2" fill="#1f1f1f"/><ellipse cx="6.6" cy="3.5" rx="0.6" ry="1.2" fill="#1f1f1f"/><ellipse cx="8.7" cy="3.5" rx="0.6" ry="1.2" fill="#1f1f1f"/><ellipse cx="10.6" cy="3.3" rx="0.5" ry="1" fill="#1f1f1f"/><path d="M6.9 11.3L13.3 4.9" stroke="#fff" stroke-width="5.2"/><path d="M6.6 11.6L13.2 5" stroke="#3d9de0" stroke-width="3.6"/><path d="M7.6 10.6L12.4 5.8" stroke="#fff" stroke-width="0.9" stroke-dasharray="1 0.9"/><path d="M5.2 12.8L5.9 9.9L8.2 12.1Z" fill="#3d9de0"/><path d="M12.4 3.4L13.9 1.9L16.2 4.2L14.7 5.7Z" fill="#3d9de0"/><path d="M13.6 3.4L14.2 2.8L15.1 3.7L14.5 4.3Z" fill="#fff"/></svg>
<div class="t" style="left:591px;top:464px;color:#000;letter-spacing:-0.1px">In progress</div>
<div class="t nr" style="left:724px;top:464px;width:96.6px;text-align:right;color:#000">6.237,60 €</div>
<div class="t nr" style="left:824px;top:464px;width:96.6px;text-align:right;color:#000">1.185,14 €</div>
<div class="dot" style="left:16px;top:480px;width:913px"></div>
<div class="vdot" style="left:154px;top:461px;height:19px"></div>
<div class="vdot" style="left:254px;top:461px;height:19px"></div>
<div class="vdot" style="left:404px;top:461px;height:19px"></div>
<div class="vdot" style="left:484px;top:461px;height:19px"></div>
<div class="vdot" style="left:564px;top:461px;height:19px"></div>
<div class="vdot" style="left:664px;top:461px;height:19px"></div>
<div class="vdot" style="left:724px;top:461px;height:19px"></div>
<div class="vdot" style="left:824px;top:461px;height:19px"></div>
<div class="vdot" style="left:924px;top:461px;height:19px"></div>
<div class="a" style="left:15px;top:481px;width:914px;height:19px;background:#f4f6fe"></div>
<svg style="left:20px;top:484px" width="15" height="16" viewBox="0 0 15 16"><path d="M0 0H4.8V1H3.8V3.1C7.6 3.1 10.8 5 10.8 8.7H0Z" fill="#1f1f1f"/><circle cx="6.5" cy="2.1" r="0.6" fill="#1f1f1f"/><circle cx="8.6" cy="3" r="0.6" fill="#1f1f1f"/><circle cx="10" cy="4.3" r="0.6" fill="#1f1f1f"/><circle cx="11" cy="6" r="0.55" fill="#1f1f1f"/><rect x="0" y="10" width="8" height="3" fill="#000"/><path d="M6.1 14.7L12.9 5.1" stroke="#fff" stroke-width="2" opacity="0.5"/><path d="M6.1 14.7L12.9 5.1" stroke="#3d9de0" stroke-width="1.15"/><circle cx="6.6" cy="6.8" r="1.35" fill="#1f1f1f" stroke="#3d9de0" stroke-width="1.1"/><circle cx="12.1" cy="12.5" r="1.35" fill="none" stroke="#3d9de0" stroke-width="1.1"/></svg>
<div class="t n" style="left:41px;top:484px;color:#000">23.08.2017</div>
<div class="t n" style="left:163px;top:484px;color:#000">2015-0015</div>
<div class="t " style="left:263px;top:484px;color:#000">Lambda GmbH</div>
<svg style="left:570px;top:484px" width="14" height="14" viewBox="0 0 14 14"><circle cx="7" cy="7" r="7" fill="#97bd50"/><path d="M3.3 7L6 9.8L10.8 4.8" fill="none" stroke="#fff" stroke-width="2"/></svg>
<div class="t " style="left:592px;top:484px;color:#000">Accepted</div>
<div class="t nr" style="left:724px;top:484px;width:96.6px;text-align:right;color:#000">4.257,60 €</div>
<div class="t nr" style="left:824px;top:484px;width:96.6px;text-align:right;color:#000">0,00 €</div>
<div class="dot" style="left:16px;top:500px;width:913px"></div>
<div class="vdot" style="left:154px;top:481px;height:19px"></div>
<div class="vdot" style="left:254px;top:481px;height:19px"></div>
<div class="vdot" style="left:404px;top:481px;height:19px"></div>
<div class="vdot" style="left:484px;top:481px;height:19px"></div>
<div class="vdot" style="left:564px;top:481px;height:19px"></div>
<div class="vdot" style="left:664px;top:481px;height:19px"></div>
<div class="vdot" style="left:724px;top:481px;height:19px"></div>
<div class="vdot" style="left:824px;top:481px;height:19px"></div>
<div class="vdot" style="left:924px;top:481px;height:19px"></div>
<div class="a" style="left:15px;top:501px;width:914px;height:19px;background:#fff"></div>
<svg style="left:20px;top:504px" width="15" height="16" viewBox="0 0 15 16"><path d="M0 0H4.8V1H3.8V3.1C7.6 3.1 10.8 5 10.8 8.7H0Z" fill="#1f1f1f"/><circle cx="6.5" cy="2.1" r="0.6" fill="#1f1f1f"/><circle cx="8.6" cy="3" r="0.6" fill="#1f1f1f"/><circle cx="10" cy="4.3" r="0.6" fill="#1f1f1f"/><circle cx="11" cy="6" r="0.55" fill="#1f1f1f"/><rect x="0" y="10" width="8" height="3" fill="#000"/><path d="M6.1 14.7L12.9 5.1" stroke="#fff" stroke-width="2" opacity="0.5"/><path d="M6.1 14.7L12.9 5.1" stroke="#3d9de0" stroke-width="1.15"/><circle cx="6.6" cy="6.8" r="1.35" fill="#1f1f1f" stroke="#3d9de0" stroke-width="1.1"/><circle cx="12.1" cy="12.5" r="1.35" fill="none" stroke="#3d9de0" stroke-width="1.1"/></svg>
<div class="t n" style="left:41px;top:504px;color:#000">10.08.2018</div>
<div class="t n" style="left:163px;top:504px;color:#000">2015-0024</div>
<div class="t " style="left:263px;top:504px;color:#000">Tau Ltd.</div>
<div class="t n" style="left:413px;top:504px;color:#000">10.08.2018</div>
<svg style="left:568px;top:502px" width="18" height="18" viewBox="0 0 18 18"><path d="M7.6 4.1H3.4Q2.6 4.1 2.6 4.9V15Q2.6 15.8 3.4 15.8H13Q13.8 15.8 13.8 15V8.2" fill="none" stroke="#1f1f1f" stroke-width="1.15"/><ellipse cx="4.6" cy="3.5" rx="0.6" ry="1.2" fill="#1f1f1f"/><ellipse cx="6.6" cy="3.5" rx="0.6" ry="1.2" fill="#1f1f1f"/><ellipse cx="8.7" cy="3.5" rx="0.6" ry="1.2" fill="#1f1f1f"/><ellipse cx="10.6" cy="3.3" rx="0.5" ry="1" fill="#1f1f1f"/><path d="M6.9 11.3L13.3 4.9" stroke="#fff" stroke-width="5.2"/><path d="M6.6 11.6L13.2 5" stroke="#3d9de0" stroke-width="3.6"/><path d="M7.6 10.6L12.4 5.8" stroke="#fff" stroke-width="0.9" stroke-dasharray="1 0.9"/><path d="M5.2 12.8L5.9 9.9L8.2 12.1Z" fill="#3d9de0"/><path d="M12.4 3.4L13.9 1.9L16.2 4.2L14.7 5.7Z" fill="#3d9de0"/><path d="M13.6 3.4L14.2 2.8L15.1 3.7L14.5 4.3Z" fill="#fff"/></svg>
<div class="t" style="left:591px;top:504px;color:#000;letter-spacing:-0.1px">In progress</div>
<div class="t nr" style="left:724px;top:504px;width:96.6px;text-align:right;color:#000">$0.00</div>
<div class="t nr" style="left:824px;top:504px;width:96.6px;text-align:right;color:#000">$0.00</div>
<div class="dot" style="left:16px;top:520px;width:913px"></div>
<div class="vdot" style="left:154px;top:501px;height:19px"></div>
<div class="vdot" style="left:254px;top:501px;height:19px"></div>
<div class="vdot" style="left:404px;top:501px;height:19px"></div>
<div class="vdot" style="left:484px;top:501px;height:19px"></div>
<div class="vdot" style="left:564px;top:501px;height:19px"></div>
<div class="vdot" style="left:664px;top:501px;height:19px"></div>
<div class="vdot" style="left:724px;top:501px;height:19px"></div>
<div class="vdot" style="left:824px;top:501px;height:19px"></div>
<div class="vdot" style="left:924px;top:501px;height:19px"></div>
<div class="a" style="left:15px;top:521px;width:914px;height:19px;background:#f4f6fe"></div>
<svg style="left:20px;top:524px" width="15" height="16" viewBox="0 0 15 16"><path d="M0 0H4.8V1H3.8V3.1C7.6 3.1 10.8 5 10.8 8.7H0Z" fill="#1f1f1f"/><circle cx="6.5" cy="2.1" r="0.6" fill="#1f1f1f"/><circle cx="8.6" cy="3" r="0.6" fill="#1f1f1f"/><circle cx="10" cy="4.3" r="0.6" fill="#1f1f1f"/><circle cx="11" cy="6" r="0.55" fill="#1f1f1f"/><rect x="0" y="10" width="8" height="3" fill="#000"/><path d="M6.1 14.7L12.9 5.1" stroke="#fff" stroke-width="2" opacity="0.5"/><path d="M6.1 14.7L12.9 5.1" stroke="#3d9de0" stroke-width="1.15"/><circle cx="6.6" cy="6.8" r="1.35" fill="#1f1f1f" stroke="#3d9de0" stroke-width="1.1"/><circle cx="12.1" cy="12.5" r="1.35" fill="none" stroke="#3d9de0" stroke-width="1.1"/></svg>
<div class="t n" style="left:41px;top:524px;color:#000">31.07.2019</div>
<div class="t n" style="left:163px;top:524px;color:#000">2015-0025</div>
<div class="t " style="left:263px;top:524px;color:#000">Theta Ltd.</div>
<svg style="left:568px;top:522px" width="18" height="18" viewBox="0 0 18 18"><path d="M7.6 4.1H3.4Q2.6 4.1 2.6 4.9V15Q2.6 15.8 3.4 15.8H13Q13.8 15.8 13.8 15V8.2" fill="none" stroke="#1f1f1f" stroke-width="1.15"/><ellipse cx="4.6" cy="3.5" rx="0.6" ry="1.2" fill="#1f1f1f"/><ellipse cx="6.6" cy="3.5" rx="0.6" ry="1.2" fill="#1f1f1f"/><ellipse cx="8.7" cy="3.5" rx="0.6" ry="1.2" fill="#1f1f1f"/><ellipse cx="10.6" cy="3.3" rx="0.5" ry="1" fill="#1f1f1f"/><path d="M6.9 11.3L13.3 4.9" stroke="#fff" stroke-width="5.2"/><path d="M6.6 11.6L13.2 5" stroke="#3d9de0" stroke-width="3.6"/><path d="M7.6 10.6L12.4 5.8" stroke="#fff" stroke-width="0.9" stroke-dasharray="1 0.9"/><path d="M5.2 12.8L5.9 9.9L8.2 12.1Z" fill="#3d9de0"/><path d="M12.4 3.4L13.9 1.9L16.2 4.2L14.7 5.7Z" fill="#3d9de0"/><path d="M13.6 3.4L14.2 2.8L15.1 3.7L14.5 4.3Z" fill="#fff"/></svg>
<div class="t" style="left:591px;top:524px;color:#000;letter-spacing:-0.1px">In progress</div>
<div class="t nr" style="left:724px;top:524px;width:96.6px;text-align:right;color:#000">0,00 €</div>
<div class="t nr" style="left:824px;top:524px;width:96.6px;text-align:right;color:#000">0,00 €</div>
<div class="dot" style="left:16px;top:540px;width:913px"></div>
<div class="vdot" style="left:154px;top:521px;height:19px"></div>
<div class="vdot" style="left:254px;top:521px;height:19px"></div>
<div class="vdot" style="left:404px;top:521px;height:19px"></div>
<div class="vdot" style="left:484px;top:521px;height:19px"></div>
<div class="vdot" style="left:564px;top:521px;height:19px"></div>
<div class="vdot" style="left:664px;top:521px;height:19px"></div>
<div class="vdot" style="left:724px;top:521px;height:19px"></div>
<div class="vdot" style="left:824px;top:521px;height:19px"></div>
<div class="vdot" style="left:924px;top:521px;height:19px"></div>
<div class="t" style="left:23px;top:544px;font-weight:bold;letter-spacing:-0.2px">Total:</div>
<div class="dot" style="left:16px;top:560px;width:913px"></div>
<div class="vdot" style="left:154px;top:541px;height:19px"></div>
<div class="vdot" style="left:254px;top:541px;height:19px"></div>
<div class="vdot" style="left:404px;top:541px;height:19px"></div>
<div class="vdot" style="left:484px;top:541px;height:19px"></div>
<div class="vdot" style="left:564px;top:541px;height:19px"></div>
<div class="vdot" style="left:664px;top:541px;height:19px"></div>
<div class="vdot" style="left:724px;top:541px;height:19px"></div>
<div class="vdot" style="left:824px;top:541px;height:19px"></div>
<div class="vdot" style="left:924px;top:541px;height:19px"></div>
<div class="a" style="left:15px;top:569px;width:914px;height:16px;background:#f0f0f0"></div>
<div class="a" style="left:32px;top:569px;width:878px;height:15px;background:#cdcdcd"></div>
<svg style="left:20px;top:572px" width="7" height="9" viewBox="0 0 7 9"><path d="M5.6 1L1.6 4.3L5.6 7.6" fill="none" stroke="#5a5a5a" stroke-width="2.1"/></svg>
</body></html>
